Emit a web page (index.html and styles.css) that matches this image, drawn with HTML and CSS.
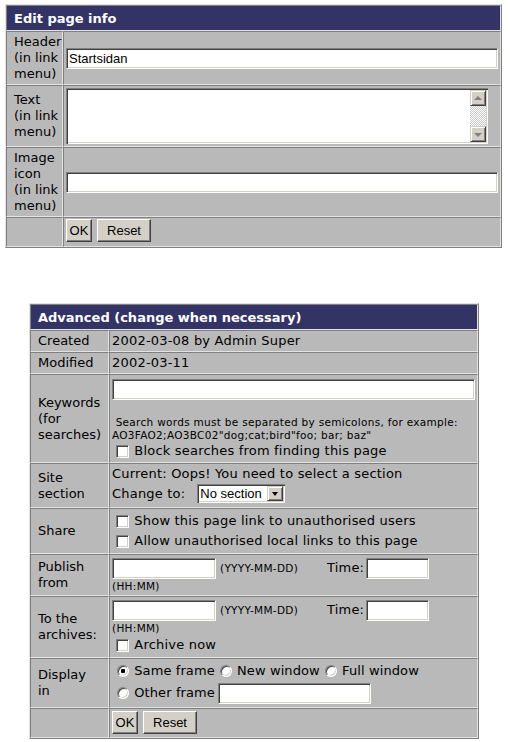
FILE: index.html
```html
<!DOCTYPE html>
<html lang="en">
<head>
<meta charset="utf-8">
<title>Edit page info</title>
<link rel="stylesheet" href="styles.css">
</head>
<body>
<form class="page">
  <table class="grid grid-edit">
    <colgroup><col class="col-lbl-edit"><col></colgroup>
    <tr><td class="title" colspan="2">Edit page info</td></tr>
    <tr>
      <td class="lbl">Header<br>(in link<br>menu)</td>
      <td class="val"><input class="field field-full" type="text" value="Startsidan"></td>
    </tr>
    <tr>
      <td class="lbl">Text<br>(in link<br>menu)</td>
      <td class="val">
        <div class="ta-frame">
          <textarea class="ta-input"></textarea>
          <div class="sb">
            <span class="sb-btn sb-up"></span>
            <span class="sb-track"></span>
            <span class="sb-btn sb-down"></span>
          </div>
        </div>
      </td>
    </tr>
    <tr>
      <td class="lbl">Image<br>icon<br>(in link<br>menu)</td>
      <td class="val"><input class="field field-full" type="text"></td>
    </tr>
    <tr>
      <td class="lbl"></td>
      <td class="val btn-cell btn-cell-edit"><div class="btn-row"><button type="button" class="btn btn-ok">OK</button><button type="reset" class="btn btn-reset">Reset</button></div></td>
    </tr>
  </table>

  <table class="grid grid-adv">
    <colgroup><col class="col-lbl-adv"><col></colgroup>
    <tr><td class="title" colspan="2">Advanced (change when necessary)</td></tr>
    <tr><td class="lbl">Created</td><td class="val">2002-03-08 by Admin Super</td></tr>
    <tr><td class="lbl">Modified</td><td class="val">2002-03-11</td></tr>
    <tr>
      <td class="lbl">Keywords<br>(for<br>searches)</td>
      <td class="val">
        <input class="field field-full kw-input" type="text">
        <div class="hint hint-search">&nbsp;Search words must be separated by semicolons, for example:<br>AO3FAO2;AO3BC02"dog;cat;bird"foo; bar; baz"</div>
        <label class="check-line kw-check"><input type="checkbox" class="check"> Block searches from finding this page</label>
      </td>
    </tr>
    <tr>
      <td class="lbl">Site<br>section</td>
      <td class="val">
        <div class="line">Current: Oops! You need to select a section</div>
        <div class="change-line">Change to:
          <span class="select"><select class="select-input"><option>No section</option></select><span class="select-btn"></span></span>
        </div>
      </td>
    </tr>
    <tr>
      <td class="lbl">Share</td>
      <td class="val">
        <label class="check-line share-line"><input type="checkbox" class="check"> Show this page link to unauthorised users</label>
        <label class="check-line share-line"><input type="checkbox" class="check"> Allow unauthorised local links to this page</label>
      </td>
    </tr>
    <tr>
      <td class="lbl">Publish<br>from</td>
      <td class="val">
        <div class="date-row"><input class="field field-date" type="text"><span class="hint hint-date">(YYYY-MM-DD)</span><span class="time-lbl">Time:</span><input class="field field-time" type="text"></div>
        <div class="hint hint-time">(HH:MM)</div>
      </td>
    </tr>
    <tr>
      <td class="lbl">To the<br>archives:</td>
      <td class="val">
        <div class="date-row"><input class="field field-date" type="text"><span class="hint hint-date">(YYYY-MM-DD)</span><span class="time-lbl">Time:</span><input class="field field-time" type="text"></div>
        <div class="hint hint-time">(HH:MM)</div>
        <label class="check-line archive-line"><input type="checkbox" class="check"> Archive now</label>
      </td>
    </tr>
    <tr>
      <td class="lbl">Display<br>in</td>
      <td class="val">
        <div class="radio-line">
          <label class="opt"><input type="radio" name="disp" class="radio" checked> Same frame</label>
          <label class="opt"><input type="radio" name="disp" class="radio"> New window</label>
          <label class="opt"><input type="radio" name="disp" class="radio"> Full window</label>
        </div>
        <div class="radio-line radio-line-2">
          <label class="opt"><input type="radio" name="disp" class="radio"> Other frame</label>
          <input class="field field-frame" type="text">
        </div>
      </td>
    </tr>
    <tr>
      <td class="lbl"></td>
      <td class="val btn-cell"><div class="btn-row"><button type="button" class="btn btn-ok">OK</button><button type="reset" class="btn btn-reset">Reset</button></div></td>
    </tr>
  </table>
</form>
</body>
</html>
```

FILE: styles.css
```css
* { box-sizing: border-box; }

body {
  margin: 0;
  padding: 4px 0 0 5px;
  background: #ffffff;
  color: #000000;
  font-family: "DejaVu Sans", Verdana, sans-serif;
  font-size: 13px;
  line-height: 16px;
}

.page { margin: 0; }

.grid {
  border-collapse: separate;
  border-spacing: 0;
  table-layout: fixed;
  background: #b9b9b9;
  border: 1px solid;
  border-color: #e2e2e2 #808080 #808080 #e2e2e2;
}

.grid td {
  border: 1px solid;
  border-color: #808080 #e2e2e2 #e2e2e2 #808080;
  padding: 2px;
  vertical-align: middle;
}

.grid td.val { letter-spacing: 0.2px; }

.grid-edit { width: 497px; }
.grid-adv { width: 450px; margin: 55px 0 0 24px; }

.col-lbl-edit { width: 57px; }
.col-lbl-adv { width: 79px; }

.grid td.title {
  background: #333366;
  color: #ffffff;
  font-weight: bold;
  padding: 5px 7px 3px;
}

.grid td.lbl {
  padding: 2px 1px 2px 7px;
  white-space: nowrap;
}

.grid-adv td.lbl { padding-right: 7px; }

/* text inputs */
.field {
  display: block;
  height: 21px;
  padding: 0 2px;
  background: #ffffff;
  border: 1px solid;
  border-color: #808080 #ffffff #ffffff #808080;
  box-shadow: inset 1px 1px 0 #404040, inset -1px -1px 0 #d4d0c8;
  font-family: "Liberation Sans", Arial, sans-serif;
  font-size: 13px;
  letter-spacing: 0;
  color: #000000;
  outline: none;
}

.field-full { width: 100%; }

/* textarea with classic scrollbar */
.ta-frame {
  display: flex;
  width: 422px;
  height: 56px;
  padding: 2px;
  background: #ffffff;
  box-shadow: inset 1px 1px 0 #808080, inset 2px 2px 0 #404040, inset -1px -1px 0 #ffffff, inset -2px -2px 0 #d4d0c8;
}

.ta-input {
  flex: 1;
  border: 0;
  margin: 0;
  padding: 1px 2px;
  resize: none;
  overflow: hidden;
  background: transparent;
  font-family: "Liberation Sans", Arial, sans-serif;
  font-size: 13px;
  outline: none;
}

.sb {
  width: 16px;
  display: flex;
  flex-direction: column;
}

.sb-track {
  flex: 1;
  background: repeating-conic-gradient(#c8c8c8 0 25%, #ffffff 0 50%) 0 0 / 2px 2px;
}

.sb-btn {
  height: 16px;
  display: flex;
  align-items: center;
  justify-content: center;
  background: #d4d0c8;
  border: 1px solid;
  border-color: #d4d0c8 #404040 #404040 #d4d0c8;
  box-shadow: inset 1px 1px 0 #ffffff, inset -1px -1px 0 #808080;
}

.sb-up::before,
.sb-down::before {
  content: "";
  width: 0;
  height: 0;
  border-left: 4px solid transparent;
  border-right: 4px solid transparent;
}

.sb-up::before { border-bottom: 4px solid #808080; margin-top: -1px; }
.sb-down::before { border-top: 4px solid #808080; margin-top: 1px; }

/* buttons */
.btn-row {
  display: flex;
  gap: 5px;
}

.grid td.btn-cell { padding-top: 2px; padding-bottom: 3px; }
.grid td.btn-cell-edit { padding-top: 1px; padding-bottom: 4px; }

.btn {
  height: 23px;
  padding: 0;
  margin: 0;
  background: #d4d0c8;
  border: 1px solid;
  border-color: #ffffff #404040 #404040 #ffffff;
  box-shadow: inset -1px -1px 0 #808080;
  font-family: "Liberation Sans", Arial, sans-serif;
  font-size: 13px;
  letter-spacing: 0;
  color: #000000;
}

.btn-ok { width: 26px; }
.btn-reset { width: 54px; }

/* hints */
.hint {
  font-size: 10.5px;
  line-height: 13px;
  letter-spacing: 0.3px;
}

.kw-input { margin-top: 2px; }

.hint-search { margin-top: 16px; }

/* checkboxes */
.check-line {
  display: flex;
  align-items: center;
  height: 16px;
  white-space: pre;
}

.kw-check { height: 18px; }
.share-line { height: 20px; }
.archive-line { height: 20px; }

.check {
  appearance: none;
  -webkit-appearance: none;
  width: 13px;
  height: 13px;
  margin: 0 1px 0 4px;
  background: #ffffff;
  border: 1px solid;
  border-color: #808080 #ffffff #ffffff #808080;
  box-shadow: inset 1px 1px 0 #404040, inset -1px -1px 0 #d4d0c8;
  flex: none;
}

/* site section */
.change-line {
  display: flex;
  align-items: center;
  height: 23px;
}

.select {
  display: inline-flex;
  width: 88px;
  height: 19px;
  margin-left: 12px;
  padding: 2px;
  background: #ffffff;
  box-shadow: inset 1px 1px 0 #808080, inset 2px 2px 0 #404040, inset -1px -1px 0 #ffffff, inset -2px -2px 0 #d4d0c8;
}

.select-input {
  appearance: none;
  -webkit-appearance: none;
  flex: 1;
  min-width: 0;
  height: 15px;
  border: 0;
  margin: 0;
  padding: 0 1px;
  background: transparent;
  font-family: "Liberation Sans", Arial, sans-serif;
  font-size: 13px;
  line-height: 15px;
  letter-spacing: 0;
  color: #000000;
  outline: none;
}

.select-btn {
  width: 16px;
  height: 15px;
  display: flex;
  align-items: center;
  justify-content: center;
  background: #d4d0c8;
  border: 1px solid;
  border-color: #d4d0c8 #404040 #404040 #d4d0c8;
  box-shadow: inset 1px 1px 0 #ffffff, inset -1px -1px 0 #808080;
}

.select-btn::before {
  content: "";
  width: 0;
  height: 0;
  margin-top: 1px;
  border-left: 3px solid transparent;
  border-right: 3px solid transparent;
  border-top: 4px solid #000000;
}

/* dates */
.date-row {
  display: flex;
  align-items: center;
  height: 22px;
}

.field-date { width: 104px; }

.hint-date {
  width: 107px;
  margin-left: 4px;
}

.time-lbl { margin-right: 2px; }

.field-time { width: 63px; }

.hint-time { line-height: 14px; }

/* radios */
.radio-line {
  display: flex;
  align-items: center;
  height: 20px;
}

.radio-line-2 { height: 24px; }

.opt {
  display: flex;
  align-items: center;
  white-space: pre;
  letter-spacing: 0.1px;
}

.radio {
  appearance: none;
  -webkit-appearance: none;
  width: 12px;
  height: 12px;
  margin: 0 1px 0 5px;
  border-radius: 50%;
  background: #ffffff;
  border: 1px solid;
  border-color: #808080 #ffffff #ffffff #808080;
  box-shadow: inset 1px 1px 0 #404040, inset -1px -1px 0 #d4d0c8;
  flex: none;
}

.radio:checked {
  background: radial-gradient(circle, #000000 0 2px, #ffffff 2.5px);
}

.field-frame {
  width: 153px;
  margin-left: 3px;
}
```
